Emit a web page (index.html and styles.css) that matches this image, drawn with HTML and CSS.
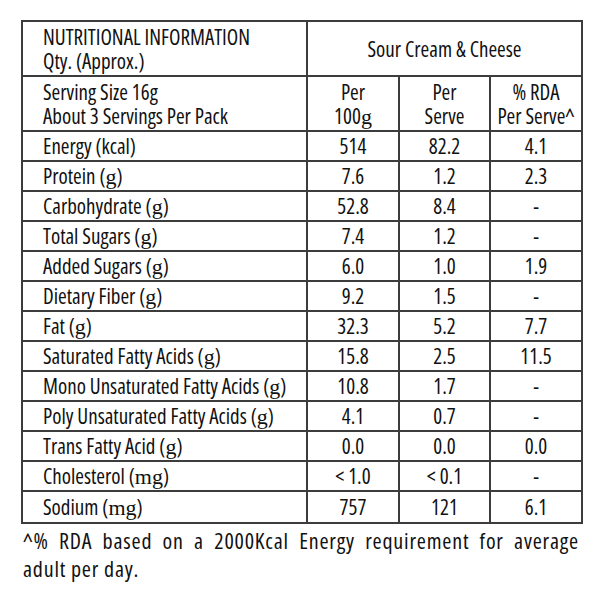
FILE: index.html
```html
<!DOCTYPE html>
<html>
<head>
<meta charset="utf-8">
<link rel="stylesheet" href="styles.css">
</head>
<body>
<div class="wrap">
<table class="nt">
  <colgroup>
    <col class="c1"><col class="c2"><col class="c3"><col class="c4">
  </colgroup>
  <tr class="h1">
    <td class="lbl two">NUTRITIONAL INFORMATION<br>Qty. (Approx.)</td>
    <td colspan="3" class="ctr">Sour Cream &amp; Cheese</td>
  </tr>
  <tr class="h2">
    <td class="lbl two">Serving Size 16g<br>About 3 Servings Per Pack</td>
    <td class="ctr two">Per<br>100<span class="u">g</span></td>
    <td class="ctr two">Per<br>Serve</td>
    <td class="ctr two">% RDA<br>Per Serve^</td>
  </tr>
  <tr><td class="lbl">Energy (kcal)</td><td>514</td><td>82.2</td><td>4.1</td></tr>
  <tr><td class="lbl">Protein (<span class="u">g</span>)</td><td>7.6</td><td>1.2</td><td>2.3</td></tr>
  <tr><td class="lbl">Carbohydrate (<span class="u">g</span>)</td><td>52.8</td><td>8.4</td><td>-</td></tr>
  <tr><td class="lbl">Total Sugars (<span class="u">g</span>)</td><td>7.4</td><td>1.2</td><td>-</td></tr>
  <tr><td class="lbl">Added Sugars (<span class="u">g</span>)</td><td>6.0</td><td>1.0</td><td>1.9</td></tr>
  <tr><td class="lbl">Dietary Fiber (<span class="u">g</span>)</td><td>9.2</td><td>1.5</td><td>-</td></tr>
  <tr><td class="lbl">Fat (<span class="u">g</span>)</td><td>32.3</td><td>5.2</td><td>7.7</td></tr>
  <tr><td class="lbl">Saturated Fatty Acids (<span class="u">g</span>)</td><td>15.8</td><td>2.5</td><td>11.5</td></tr>
  <tr><td class="lbl">Mono Unsaturated Fatty Acids (<span class="u">g</span>)</td><td>10.8</td><td>1.7</td><td>-</td></tr>
  <tr><td class="lbl">Poly Unsaturated Fatty Acids (<span class="u">g</span>)</td><td>4.1</td><td>0.7</td><td>-</td></tr>
  <tr><td class="lbl">Trans Fatty Acid (<span class="u">g</span>)</td><td>0.0</td><td>0.0</td><td>0.0</td></tr>
  <tr><td class="lbl">Cholesterol (<span class="u">mg</span>)</td><td>&lt; 1.0</td><td>&lt; 0.1</td><td>-</td></tr>
  <tr><td class="lbl">Sodium (<span class="u">mg</span>)</td><td>757</td><td>121</td><td>6.1</td></tr>
</table>
<p class="note"><span class="l1">^% RDA based on a 2000Kcal Energy requirement for average</span><span class="l2">adult per day.</span></p>
</div>
</body>
</html>
```
FILE: styles.css
```css
html, body {
  margin: 0;
  padding: 0;
  background: #fff;
}
.wrap {
  padding: 20px 20px 0 21px;
  font-family: "Open Sans", "Roboto Condensed", sans-serif;
  font-stretch: 75%;
  font-weight: 450;
  color: #111;
}
.nt {
  border-collapse: collapse;
  width: 560px;
  table-layout: fixed;
  font-size: 21px;
}
.c1 { width: 285px; }
.c2 { width: 92px; }
.c3 { width: 91px; }
.c4 { width: 92px; }
.nt td {
  border: 2px solid #3c3c3c;
  text-align: center;
  height: 28px;
  padding: 0;
  line-height: 24px;
  vertical-align: middle;
  white-space: nowrap;
}
.nt td.lbl {
  text-align: left;
  padding-left: 20px;
}
.nt tr.h1 td { height: 53px; }
.nt tr.h2 td { height: 53px; }
.nt tr:last-child td { height: 30px; }
.two { line-height: 24px; }
.u {
  font-family: "Liberation Serif", serif;
  font-stretch: normal;
  font-weight: 400;
  font-size: 22px;
  line-height: 0;
}
.note {
  margin: 2px 0 0 2px;
  font-size: 22px;
  letter-spacing: 0.8px;
  line-height: 28px;
  width: 556px;
}
.l1 {
  display: block;
  text-align: justify;
  text-align-last: justify;
}
.l2 {
  display: block;
  text-align: left;
}
```
